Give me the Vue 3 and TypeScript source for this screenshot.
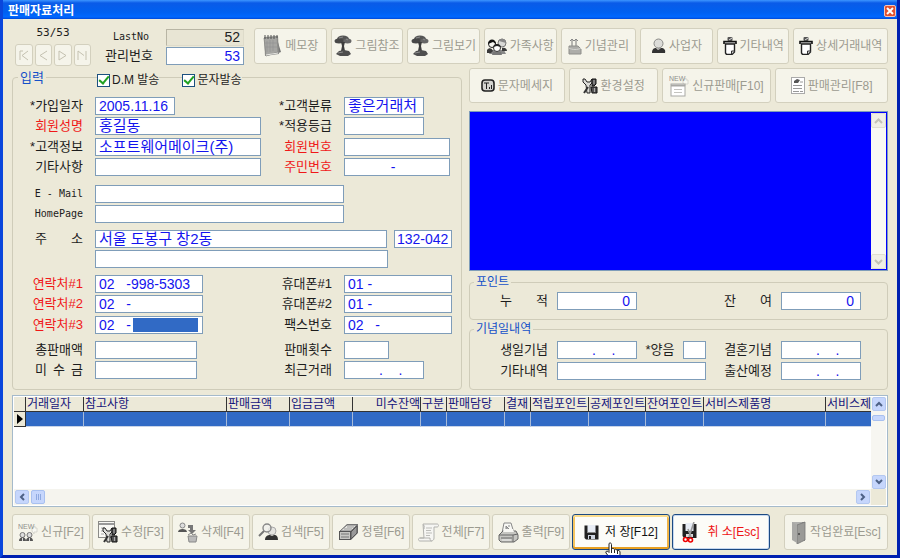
<script setup lang="ts">
import { reactive } from 'vue'

interface ActionButton {
  id: string
  text: string
  icon: string
}

interface GridColumn {
  title: string
  width?: number
  right?: boolean
}

const nb = (n: number): string => '\u00a0'.repeat(n)
const emptyDate = `${nb(8)}.${nb(4)}.`

const form = reactive({
  lastNo: '52',
  manageNo: '53',
  dm: true,
  sms: true,
  joined: '2005.11.16',
  name: '홍길동',
  info: '소프트웨어메이크(주)',
  etc: '',
  kind: '좋은거래처',
  grade: '',
  memberNo: '',
  residentNo: `${nb(11)}-`,
  email: '',
  homepage: '',
  address1: '서울 도봉구 창2동',
  address2: '',
  zip: '132-042',
  tel1: `02${nb(3)}-998-5303`,
  tel2: `02${nb(3)}-`,
  tel3: `02${nb(3)}-`,
  cell1: '01 -',
  cell2: '01 -',
  fax: `02${nb(3)}-`,
  total: '',
  unpaid: '',
  count: '',
  recent: emptyDate,
  points: '0',
  remain: '0',
  birthday: emptyDate,
  calendar: '',
  wedding: emptyDate,
  anniversary: '',
  childbirth: emptyDate,
  notes: '',
})

const navButtons = [
  { id: 'first', label: '처음', path: 'M2 2v9M10 2L4 6.500L10 11M2 2h3' },
  { id: 'prev', label: '이전', path: 'M10 2L3 6.500L10 11' },
  { id: 'next', label: '다음', path: 'M2 11V2L9 6.500L2 11' },
  { id: 'last', label: '마지막', path: 'M2 11V2L8 6.500M10 11V2' },
]

const topButtons: ActionButton[] = [
  { id: 'memo', text: '메모장', icon: 'memo' },
  { id: 'pic-ref', text: '그림참조', icon: 'tree' },
  { id: 'pic-view', text: '그림보기', icon: 'tree' },
  { id: 'family', text: '가족사항', icon: 'family' },
  { id: 'anniv', text: '기념관리', icon: 'cake' },
  { id: 'business', text: '사업자', icon: 'person' },
  { id: 'others', text: '기타내역', icon: 'clip' },
  { id: 'detail', text: '상세거래내역', icon: 'clip' },
]

const sideButtons: ActionButton[] = [
  { id: 'message', text: '문자메세지', icon: 'signal' },
  { id: 'settings', text: '환경설정', icon: 'tools' },
  { id: 'new-sale', text: '신규판매[F10]', icon: 'newDoc' },
  { id: 'sales', text: '판매관리[F8]', icon: 'doc' },
]

const bottomButtons: ActionButton[] = [
  { id: 'new', text: '신규[F2]', icon: 'newPeople' },
  { id: 'edit', text: '수정[F3]', icon: 'docTools' },
  { id: 'delete', text: '삭제[F4]', icon: 'trash' },
  { id: 'search', text: '검색[F5]', icon: 'search' },
  { id: 'sort', text: '정렬[F6]', icon: 'stack' },
  { id: 'all', text: '전체[F7]', icon: 'scroll' },
  { id: 'print', text: '출력[F9]', icon: 'printer' },
]

const columns: GridColumn[] = [
  { title: '거래일자', width: 58 },
  { title: '참고사항', width: 143 },
  { title: '판매금액', width: 63 },
  { title: '입금금액', width: 63 },
  { title: '미수잔액', width: 68, right: true },
  { title: '구분', width: 26 },
  { title: '판매담당', width: 58 },
  { title: '결재', width: 26 },
  { title: '적립포인트', width: 58 },
  { title: '공제포인트', width: 57 },
  { title: '잔여포인트', width: 58 },
  { title: '서비스제품명', width: 122 },
  { title: '서비스제' },
]

const newTag =
  '<path d="M14 6l3-2v2h2v4h-3v2l-2-3z" fill="#f8f8f2" stroke="#cfcfc8" stroke-width=".8"/><text x="0" y="7" font-family="Liberation Sans, sans-serif" font-size="7" fill="#8f8f8a">NEW</text>'
const wrenches =
  '<path d="M1 1v3l3 3 1 8h3l0-8 2-2V1L8 4H5L3 1z" fill="#dcdcd8" stroke="#222"/><path d="M10 1h4v5l-2 2h-2zM9 9h6v6h-5z" fill="#555" stroke="#111"/><path d="M2 15l4-6" stroke="#333" stroke-width="2"/><path d="M12 2v4M12.500 10v4" stroke="#aaa"/>'

const icons: Record<string, { w: number; h: number; body: string }> = {
  memo: {
    w: 20,
    h: 24,
    body: '<path d="M15 5l4 13-5 2z" fill="#777"/><path d="M2 3L16 2l1 18L3 22z" fill="#8d8d8b"/><path d="M2 4L15 3l1 15L4 22z" fill="#a6a6a3" stroke="#8a8a87" stroke-width=".8"/><path d="M5 7v11M8 6v12M11 6v11M3 9h12M3 13h12" stroke="#929290" stroke-width=".6"/><path d="M3 1v4M6 1v4M9 1v4M12 1v4M15 1v3" stroke="#555" stroke-width="1"/><path d="M4 21l12-2" stroke="#e8e8e4" stroke-width="1"/>',
  },
  tree: {
    w: 18,
    h: 22,
    body: '<ellipse cx="9" cy="4" rx="6" ry="3.500" fill="#555"/><ellipse cx="5" cy="6" rx="4.500" ry="2.500" fill="#484848"/><ellipse cx="13.500" cy="6" rx="4" ry="2.500" fill="#666"/><path d="M7 7h4l-1 4 1 5H7l1-5z" fill="#3d3d3d"/><path d="M2 19l3-3 5-1 5 1 2 3-3 2-8 0z" fill="#4e4e4e"/><path d="M5 3l4-1M4 18l5-1M12 4l2 1" stroke="#8c8c8c" stroke-width="1"/>',
  },
  family: {
    w: 20,
    h: 17,
    body: '<path d="M4 12h13l2 4H2z" fill="#888"/><circle cx="5" cy="6" r="3.500" fill="#f6f6f2" stroke="#222"/><path d="M1 6c0-6 8-6 8 0l-3-2z" fill="#111"/><circle cx="15" cy="5" r="4" fill="#d9d9d6" stroke="#777"/><path d="M12 3c2-4 7-2 7 2z" fill="#888"/><circle cx="10" cy="10" r="3.500" fill="#fff" stroke="#333"/><path d="M6 9c1-4 7-4 8 0l-4-1z" fill="#222"/><path d="M0 12c2-3 5-2 6 1l-2 2H0zM15 10c3-1 5 1 5 3h-5z" fill="#3a3a3a"/><path d="M6 14h8l1 3H5z" fill="#777"/>',
  },
  cake: {
    w: 14,
    h: 17,
    body: '<path d="M4 2v6M8 2v6" stroke="#777"/><path d="M2 3l2-2 2 2M6 3l2-2 2 2" fill="none" stroke="#888"/><path d="M1 8h9l3 3v5H1z" fill="#adada9" stroke="#8e8e8a"/><path d="M1 10c3 2 9 2 12 0" fill="none" stroke="#d4d4d0"/>',
  },
  person: {
    w: 15,
    h: 16,
    body: '<circle cx="7.500" cy="5.500" r="4.500" fill="#dcdcd8" stroke="#8b8b88"/><path d="M1 15c0-4 2-5 4-5l2 2 3-2c3 0 5 2 4 5z" fill="#333"/><path d="M6 10h3l-1 2z" fill="#999"/>',
  },
  clip: {
    w: 14,
    h: 18,
    body: '<rect x="4.500" y="0" width="5" height="4" rx="1" fill="#555"/><path d="M6 3l3-2" stroke="#ddd"/><path d="M1 7V4.500h12V7" fill="#bbb" stroke="#111" stroke-width="1.600"/><path d="M2.500 7V16l1 1.500H9L11.500 15V7z" fill="#fff" stroke="#222" stroke-width="1.400"/><path d="M8.500 17v-3h3" fill="#ccc" stroke="#333"/>',
  },
  signal: {
    w: 14,
    h: 13,
    body: '<rect x="1" y="1" width="12" height="11" rx="3" fill="#d4d4d0" stroke="#222" stroke-width="1.600"/><path d="M3 4h5M5.500 4v6M8.500 8v2M10.500 6v4" stroke="#222" stroke-width="1"/>',
  },
  tools: { w: 16, h: 16, body: wrenches },
  newDoc: {
    w: 20,
    h: 24,
    body: `${newTag}<rect x="2" y="10" width="14" height="12" fill="#fff" stroke="#a8a8a4"/><path d="M2 11.500h14" stroke="#a8a8a4" stroke-width="2"/><path d="M5 15.500h8M5 18.500h8" stroke="#c4c4c0"/>`,
  },
  doc: {
    w: 14,
    h: 18,
    body: '<rect x=".5" y=".5" width="13" height="16" fill="#fff" stroke="#aaa"/><path d="M3 4l3-2 3 1-2 3H3z" fill="#555"/><path d="M9 5h3M2 8.500h9M2 11.500h9M2 14.500h6M9 14.500h3" stroke="#999"/>',
  },
  newPeople: {
    w: 20,
    h: 20,
    body: `${newTag}<circle cx="4.500" cy="13" r="2.500" fill="#ddd" stroke="#777"/><circle cx="11.500" cy="13" r="2.500" fill="#ddd" stroke="#777"/><path d="M1 19c0-5 7-5 7 0zM8 19c0-5 7-5 7 0z" fill="#555"/><path d="M4.500 16v3M11.500 16v3" stroke="#ddd"/>`,
  },
  docTools: {
    w: 20,
    h: 22,
    body: `<rect x=".5" y=".5" width="16" height="16" fill="#f8f8f4" stroke="#8b8b88"/><path d="M1 3h15" stroke="#999" stroke-width="2"/><path d="M3 7h4M3 10h3M3 13h3" stroke="#aaa"/><g transform="translate(4 6)">${wrenches}</g>`,
  },
  trash: {
    w: 20,
    h: 21,
    body: '<circle cx="4.500" cy="3.500" r="2.500" fill="#ddd" stroke="#888"/><path d="M0 10c0-4 9-4 9 0z" fill="#555"/><path d="M10 3h5v5h3l-4 4-4-4h2V6h-2z" fill="#777"/><path d="M10 14h9l-1 6h-7z" fill="#bbb" stroke="#888"/><path d="M10 13l3-2 2 2 3-1" fill="none" stroke="#888"/>',
  },
  search: {
    w: 20,
    h: 18,
    body: '<circle cx="14" cy="8" r="4" fill="#e4e4e0" stroke="#aaa"/><path d="M7 17c0-4 3-5 5-5l2 1 2-1c3 0 4 2 4 5z" fill="#333"/><circle cx="9" cy="5" r="4" fill="#f0f0ec" fill-opacity=".8" stroke="#888" stroke-width="1.400"/><path d="M6 8l-5 5" stroke="#777" stroke-width="2"/>',
  },
  stack: {
    w: 21,
    h: 18,
    body: '<path d="M1 9L9 1h11v9l-7 7H1z" fill="#777"/><path d="M2 8l7-6h10l-6 6z" fill="#e2e2de" stroke="#777"/><path d="M13 9l6-6v7l-6 6z" fill="#999" stroke="#555"/><rect x="1.500" y="8.500" width="11" height="8" fill="#c8c8c4" stroke="#555"/><path d="M3 11h8M3 14h8" stroke="#777"/><path d="M6 6l8 0M9 4h7" stroke="#999"/>',
  },
  scroll: {
    w: 21,
    h: 19,
    body: '<path d="M5 1h14c2 0 2 3 0 3h-3v11c0 3-3 3-3 3H2c-2 0-2-3 0-3h4z" fill="#f6f6f3" stroke="#b2b2ae"/><path d="M5 2c2 0 1 2 1 4M2 15h10c0 3 1 3 2 3" fill="none" stroke="#b2b2ae"/><path d="M8 5h6M8 7.500h5M8 10h6M8 12.500h4" stroke="#bdbdb9"/>',
  },
  printer: {
    w: 21,
    h: 21,
    body: '<path d="M4 11L6 1h7l3 10z" fill="#f8f8f4" stroke="#888"/><path d="M8 4v5l4-1zM11 3v2" fill="#aaa" stroke="#888"/><path d="M1 13l4-4h13l2 4v4l-4 3H3l-2-2z" fill="#c6c6c2" stroke="#666"/><path d="M1 13h14l5-1M3 16h11M15 13v7" fill="none" stroke="#666"/><path d="M5 10h11l-1-3H6z" fill="#f8f8f4"/><path d="M4 18h9" stroke="#eee"/>',
  },
  save: {
    w: 15,
    h: 15,
    body: '<path d="M.5 .5h14v14H2L.5 13z" fill="#222"/><rect x="3.500" y="0" width="8" height="7" fill="#e8edf5"/><path d="M3 7.500h9" stroke="#888"/><rect x="4" y="10" width="7" height="4" fill="#cfd6e2"/><rect x="5" y="11" width="2" height="3" fill="#222"/>',
  },
  cancel: {
    w: 16,
    h: 21,
    body: '<path d="M.5 2h14v14H2L.5 14z" fill="#222"/><rect x="3.500" y="1" width="8" height="8" fill="#e8edf5"/><path d="M4 12h7v3H4z" fill="#ddd"/><path d="M12 0L7 15M6 7l3 8" stroke="#999" stroke-width="1.600"/><circle cx="3.500" cy="17.500" r="2" fill="none" stroke="#e00" stroke-width="1.600"/><circle cx="8.500" cy="18" r="2" fill="none" stroke="#e00" stroke-width="1.600"/>',
  },
  door: {
    w: 16,
    h: 23,
    body: '<path d="M1 1h13v19l-3-1V3H1z" fill="#8c8c89"/><rect x="1" y="1" width="10" height="18" fill="#b0b0ad"/><path d="M6 4l8-3v18l-8 4z" fill="#9a9a97" stroke="#777" stroke-width=".8"/><path d="M1 1v18l5 3V4z" fill="#a9a9a6"/><path d="M8 12v2" stroke="#444" stroke-width="1.500"/>',
  },
}
</script>

<template>
  <div class="window">
    <header class="title-bar">
      <h1>판매자료처리</h1>
      <button class="close" type="button" aria-label="닫기">
        <svg width="8" height="8" viewBox="0 0 8 8"><path d="M1 1l6 6M7 1L1 7" stroke="#fff" stroke-width="2" /></svg>
      </button>
    </header>

    <main class="content">
      <div class="top">
        <div class="record-nav">
          <span class="position">53/53</span>
          <div class="nav-buttons">
            <button v-for="n in navButtons" :key="n.id" type="button" :aria-label="n.label" disabled>
              <svg width="12" height="13" viewBox="0 0 12 13"><path :d="n.path" fill="none" stroke="#c4c1b0" /></svg>
            </button>
          </div>
        </div>
        <div class="numbers">
          <label class="latin" for="lastNo">LastNo</label>
          <input id="lastNo" v-model="form.lastNo" class="right readonly" readonly />
          <label for="manageNo">관리번호</label>
          <input id="manageNo" v-model="form.manageNo" class="right" />
        </div>
        <div class="toolbar">
          <button v-for="b in topButtons" :key="b.id" class="btn" type="button" disabled>
            <svg :width="icons[b.icon].w" :height="icons[b.icon].h" v-html="icons[b.icon].body" />
            <span>{{ b.text }}</span>
          </button>
        </div>
      </div>

      <div class="body">
        <fieldset class="entry">
          <legend>입력</legend>
          <div class="checks">
            <label><input v-model="form.dm" type="checkbox" />D.M 발송</label>
            <label><input v-model="form.sms" type="checkbox" />문자발송</label>
          </div>

          <div class="group">
            <label for="joined">*가입일자</label>
            <div><input id="joined" v-model="form.joined" class="w-date" /></div>
            <label for="kind">*고객분류</label>
            <div><input id="kind" v-model="form.kind" class="w-date hangul" /></div>
            <label for="name" class="red">회원성명</label>
            <div><input id="name" v-model="form.name" class="w-name hangul" /></div>
            <label for="grade">*적용등급</label>
            <div><input id="grade" v-model="form.grade" class="w-date" /></div>
          </div>

          <div class="group near">
            <label for="info">*고객정보</label>
            <div><input id="info" v-model="form.info" class="w-name hangul" /></div>
            <label for="memberNo" class="red">회원번호</label>
            <div><input id="memberNo" v-model="form.memberNo" class="w-no" /></div>
            <label for="etc">기타사항</label>
            <div><input id="etc" v-model="form.etc" class="w-name hangul" /></div>
            <label for="residentNo" class="red">주민번호</label>
            <div><input id="residentNo" v-model="form.residentNo" class="w-no" /></div>
          </div>

          <div class="group far">
            <label for="email" class="latin">E - Mail</label>
            <div class="wide"><input id="email" v-model="form.email" class="w-mail" /></div>
            <label for="homepage" class="latin">HomePage</label>
            <div class="wide"><input id="homepage" v-model="form.homepage" class="w-mail" /></div>
          </div>

          <div class="group mid">
            <label for="address1" class="spread">주 소</label>
            <div class="wide">
              <input id="address1" v-model="form.address1" class="w-address hangul" />
              <input v-model="form.zip" class="w-zip" aria-label="우편번호" />
            </div>
            <span></span>
            <div class="wide"><input v-model="form.address2" class="w-address hangul" aria-label="상세주소" /></div>
          </div>

          <div class="group mid">
            <label for="tel1" class="red">연락처#1</label>
            <div><input id="tel1" v-model="form.tel1" class="w-tel" /></div>
            <label for="cell1">휴대폰#1</label>
            <div><input id="cell1" v-model="form.cell1" class="w-tel" /></div>
            <label for="tel2" class="red">연락처#2</label>
            <div><input id="tel2" v-model="form.tel2" class="w-tel" /></div>
            <label for="cell2">휴대폰#2</label>
            <div><input id="cell2" v-model="form.cell2" class="w-tel" /></div>
          </div>

          <div class="group near">
            <label for="tel3" class="red">연락처#3</label>
            <div class="selected-field">
              <input id="tel3" v-model="form.tel3" class="w-tel" />
              <span class="selection"></span>
            </div>
            <label for="fax">팩스번호</label>
            <div><input id="fax" v-model="form.fax" class="w-tel" /></div>
          </div>

          <div class="group mid">
            <label for="total">총판매액</label>
            <div><input id="total" v-model="form.total" class="w-sum" /></div>
            <label for="count">판매횟수</label>
            <div><input id="count" v-model="form.count" class="w-count" /></div>
            <label for="unpaid" class="spread">미 수 금</label>
            <div><input id="unpaid" v-model="form.unpaid" class="w-sum" /></div>
            <label for="recent">최근거래</label>
            <div><input id="recent" v-model="form.recent" class="w-date" /></div>
          </div>
        </fieldset>

        <div class="side">
          <div class="side-buttons">
            <button v-for="b in sideButtons" :key="b.id" class="btn" type="button" disabled>
              <svg :width="icons[b.icon].w" :height="icons[b.icon].h" v-html="icons[b.icon].body" />
              <span>{{ b.text }}</span>
            </button>
          </div>

          <div class="notes">
            <textarea v-model="form.notes" aria-label="메모"></textarea>
            <div class="notes-scroll">
              <button type="button" aria-label="위로" disabled>
                <svg width="9" height="6" viewBox="0 0 9 6"><path d="M1 5l3.500-3.500L8 5" fill="none" stroke="#c3c2b6" stroke-width="2" /></svg>
              </button>
              <button type="button" aria-label="아래로" disabled>
                <svg width="9" height="6" viewBox="0 0 9 6"><path d="M1 1l3.500 3.500L8 1" fill="none" stroke="#c3c2b6" stroke-width="2" /></svg>
              </button>
            </div>
          </div>

          <fieldset class="panel points">
            <legend>포인트</legend>
            <div class="pair">
              <label for="points" class="spread">누 적</label>
              <div><input id="points" v-model="form.points" class="w-date right inset" /></div>
              <label for="remain" class="spread">잔 여</label>
              <div><input id="remain" v-model="form.remain" class="w-date right inset" /></div>
            </div>
          </fieldset>

          <fieldset class="panel days">
            <legend>기념일내역</legend>
            <div class="pair">
              <label for="birthday">생일기념</label>
              <div class="birth">
                <input id="birthday" v-model="form.birthday" class="w-date" />
                <label for="calendar">*양음</label>
                <input id="calendar" v-model="form.calendar" class="w-tiny" />
              </div>
              <label for="wedding">결혼기념</label>
              <div><input id="wedding" v-model="form.wedding" class="w-date" /></div>
              <label for="anniversary">기타내역</label>
              <div><input id="anniversary" v-model="form.anniversary" class="w-memo hangul" /></div>
              <label for="childbirth">출산예정</label>
              <div><input id="childbirth" v-model="form.childbirth" class="w-date" /></div>
            </div>
          </fieldset>
        </div>
      </div>

      <section class="sheet">
        <div class="sheet-main">
          <table>
            <colgroup>
              <col class="mark-col" />
              <col v-for="c in columns" :key="c.title" :style="c.width ? { width: c.width + 'px' } : undefined" />
            </colgroup>
            <thead>
              <tr>
                <th></th>
                <th v-for="c in columns" :key="c.title" :class="{ end: c.right }">{{ c.title }}</th>
              </tr>
            </thead>
            <tbody>
              <tr>
                <td class="mark">
                  <svg width="6" height="10" viewBox="0 0 6 10"><path d="M0 0l6 5-6 5z" fill="#000" /></svg>
                </td>
                <td v-for="c in columns" :key="c.title"></td>
              </tr>
            </tbody>
          </table>
          <div class="h-scroll">
            <button class="sb" type="button" aria-label="왼쪽">
              <svg width="6" height="8" viewBox="0 0 6 8"><path d="M5 1L2 4l3 3" fill="none" stroke="#4d6185" stroke-width="2" /></svg>
            </button>
            <span class="h-thumb"><i></i><i></i><i></i></span>
            <button class="sb push" type="button" aria-label="오른쪽">
              <svg width="6" height="8" viewBox="0 0 6 8"><path d="M1 1l3 3-3 3" fill="none" stroke="#4d6185" stroke-width="2" /></svg>
            </button>
          </div>
        </div>
        <div class="v-scroll">
          <button class="sb" type="button" aria-label="위로">
            <svg width="8" height="6" viewBox="0 0 8 6"><path d="M1 5l3-3 3 3" fill="none" stroke="#4d6185" stroke-width="2" /></svg>
          </button>
          <span class="v-thumb"></span>
          <button class="sb push-down" type="button" aria-label="아래로">
            <svg width="8" height="6" viewBox="0 0 8 6"><path d="M1 1l3 3 3-3" fill="none" stroke="#4d6185" stroke-width="2" /></svg>
          </button>
          <span class="corner"></span>
        </div>
      </section>

      <footer class="actions">
        <button v-for="b in bottomButtons" :key="b.id" class="btn action" type="button" disabled>
          <svg :width="icons[b.icon].w" :height="icons[b.icon].h" v-html="icons[b.icon].body" />
          <span>{{ b.text }}</span>
        </button>
        <button class="btn live save" type="button">
          <svg :width="icons.save.w" :height="icons.save.h" v-html="icons.save.body" />
          <span>저 장[F12]</span>
          <svg class="pointer" width="18" height="20" viewBox="0 0 18 20">
            <path d="M4 1.500c1-1 2.500-.5 2.500 1V7c1-1 2.500-.5 3 .5 1-.7 2.300-.2 2.500 1 1.500-.5 3 .3 3 1.500V15l-2 5H6l-1-4-4-5c-.8-1.500 1-2.500 2-1.500l1 1z" fill="#fff" stroke="#222" />
            <path d="M6.500 7v4M9.500 8v3M12.500 9v3" stroke="#222" />
          </svg>
        </button>
        <button class="btn live cancel" type="button">
          <svg :width="icons.cancel.w" :height="icons.cancel.h" v-html="icons.cancel.body" />
          <span>취 소[Esc]</span>
        </button>
        <button class="btn done" type="button" disabled>
          <svg :width="icons.door.w" :height="icons.door.h" v-html="icons.door.body" />
          <span>작업완료[Esc]</span>
        </button>
      </footer>
    </main>
  </div>
</template>

<style>
body {
  margin: 0;
  background: #ece9d8;
}
</style>

<style scoped>
.window,
.window * {
  box-sizing: border-box;
}

.window {
  display: flex;
  flex-direction: column;
  min-height: 100vh;
  overflow: hidden;
  border: solid #0a46dc;
  border-width: 0 3px 3px;
  border-right-color: #0020b0;
  border-bottom-color: #0020b0;
  background: #ece9d8;
  color: #1c1c1c;
  font: 13px/16px 'Liberation Sans', 'Noto Sans CJK KR', sans-serif;
}

button,
input,
textarea {
  margin: 0;
  font-family: inherit;
}

svg {
  display: block;
  flex: none;
}

.title-bar {
  display: flex;
  align-items: center;
  justify-content: space-between;
  height: 19px;
  margin: 0 -3px;
  padding: 2px 4px 0 8px;
  background: linear-gradient(#3d95ff 0, #0a5be8 3px, #0060f0 12px, #0068ff 17px, #0048d8 19px);
}

.title-bar h1 {
  margin: 0;
  color: #fff;
  font-size: 12px;
  line-height: 16px;
  font-weight: 700;
}

.close {
  display: flex;
  align-items: center;
  justify-content: center;
  width: 12px;
  height: 12px;
  padding: 0;
  border: 1px solid #f4c4b8;
  border-radius: 2px;
  background: #e2512f;
}

.content {
  display: flex;
  flex: 1;
  flex-direction: column;
  padding: 9px 9px 5px;
}

.top {
  display: flex;
  height: 36px;
}

.record-nav {
  display: flex;
  flex-direction: column;
  align-items: center;
  justify-content: space-between;
  width: 79px;
  height: 39px;
  padding-left: 3px;
  margin-top: -1px;
}

.position {
  font: 11px/12px 'DejaVu Sans Mono', monospace;
}

.nav-buttons {
  display: flex;
  gap: 2px;
  width: 100%;
}

.nav-buttons button {
  display: flex;
  flex: 1;
  align-items: center;
  justify-content: center;
  height: 22px;
  padding: 0;
  border: 1px solid #d3d0be;
  border-radius: 3px;
  background: #f5f4ea;
}

.numbers {
  display: grid;
  grid-template-columns: 49px 78px;
  grid-auto-rows: 18px;
  gap: 1px 12px;
  width: 163px;
  padding-left: 14px;
  justify-content: start;
  align-items: center;
}

.numbers label {
  white-space: nowrap;
}

label.latin {
  font: 10px/18px 'DejaVu Sans Mono', monospace;
}

.numbers label.latin {
  text-align: right;
  padding-right: 5px;
}

.toolbar {
  display: grid;
  flex: 1;
  grid-template-columns: 73fr 73fr 73fr 73fr 76fr 73fr 73fr 95fr;
  gap: 4px;
}

.btn {
  display: flex;
  align-items: center;
  justify-content: center;
  gap: 3px;
  min-width: 0;
  height: 36px;
  padding: 0;
  border: 1px solid #d3d0be;
  border-radius: 3px;
  background: #f5f4ea;
  color: #9c9b90;
  font-size: 12px;
  line-height: 16px;
  white-space: nowrap;
}

input {
  height: 18px;
  padding: 0 3px;
  border: 1px solid #7f9db9;
  border-radius: 0;
  outline: 0;
  background: #fff;
  color: #1414ee;
  font-size: 14px;
  line-height: 16px;
}

input.hangul {
  padding-bottom: 3px;
  font-size: 15px;
}

input.right {
  text-align: right;
}

input.inset {
  padding-right: 6px;
}

input.readonly {
  height: 17px;
  border-color: #b8b5a4 #dedbca #dedbca #b8b5a4;
  background: #e8e5d4;
  color: #222;
}

.body {
  display: grid;
  grid-template-columns: 450fr 419fr;
  gap: 7px;
  margin-top: 4px;
}

fieldset {
  min-width: 0;
  margin: 0;
  border: 1px solid #cfccb9;
  border-radius: 4px;
}

legend {
  padding: 0 2px;
  color: #1450c8;
}

.entry {
  margin-top: 3px;
  padding: 0 9px 10px 15px;
}

.entry legend {
  margin-left: -10px;
  line-height: 13px;
}

.checks {
  display: flex;
  gap: 23px;
  height: 14px;
  margin: -11px 0 10px 69px;
  font-size: 12px;
}

.checks label {
  display: flex;
  align-items: center;
  gap: 2px;
  background: #ece9d8;
}

.checks input {
  display: grid;
  place-items: center;
  appearance: none;
  width: 13px;
  height: 13px;
  padding: 0;
  border: 1px solid #1c5180;
}

.checks input:checked::after {
  content: '';
  width: 4px;
  height: 8px;
  border: solid #21a121;
  border-width: 0 2px 2px 0;
  transform: translateY(-1px) rotate(40deg);
}

.group {
  display: grid;
  grid-template-columns: 55px 1fr 55px 108px;
  grid-auto-rows: 18px;
  gap: 2px 12px;
}

.group.near {
  margin-top: 3px;
}

.group.mid {
  margin-top: 7px;
}

.group.far {
  margin-top: 9px;
}

.group > div,
.pair > div {
  display: flex;
  min-width: 0;
}

.group label,
.pair label {
  line-height: 18px;
}

.group > label,
.pair > label {
  text-align: right;
  white-space: nowrap;
}

.group > .wide {
  grid-column: 2 / -1;
  gap: 7px;
}

.group > label.spread,
.pair > label.spread {
  width: 48px;
  margin-left: auto;
  text-align: justify;
  text-align-last: justify;
  white-space: normal;
}

.red {
  color: #f01818;
}

.w-date {
  width: 80px;
}

.w-name {
  width: 166px;
}

.w-no {
  width: 106px;
}

.w-mail {
  width: 249px;
}

.w-address {
  width: 293px;
}

.w-zip {
  width: 58px;
  padding: 0 2px;
}

.w-tel {
  width: 108px;
}

.w-sum {
  width: 102px;
}

.w-count {
  width: 45px;
}

.w-tiny {
  width: 23px;
}

.w-memo {
  width: 149px;
}

.selected-field {
  position: relative;
}

.selection {
  position: absolute;
  top: 2px;
  left: 38px;
  width: 65px;
  height: 14px;
  background: #316ac5;
}

.side {
  display: flex;
  flex-direction: column;
  min-width: 0;
}

.side-buttons {
  display: grid;
  grid-template-columns: 96fr 89fr 110fr 113fr;
  gap: 4px;
}

.side-buttons .btn {
  height: 35px;
}

.notes {
  display: flex;
  flex: 1;
  margin-top: 8px;
  border: 1px solid #7f9db9;
  background: #0000ff;
}

.notes textarea {
  flex: 1;
  height: 100%;
  min-width: 0;
  padding: 2px;
  border: 0;
  outline: 0;
  resize: none;
  background: transparent;
  color: #fff;
}

.notes-scroll {
  display: flex;
  flex-direction: column;
  justify-content: space-between;
  width: 15px;
  margin: 1px;
  background: #f9f9f4;
}

.notes-scroll button {
  display: flex;
  align-items: center;
  justify-content: center;
  height: 15px;
  padding: 0;
  border: 1px solid #e0dfd2;
  border-radius: 2px;
  background: #f0efe6;
}

.panel legend {
  margin-left: -25px;
  font-size: 12px;
  line-height: 12px;
}

.points {
  margin-top: 5px;
  padding: 4px 26px 9px 29px;
}

.days {
  margin-top: 3px;
  padding: 6px 26px 9px 29px;
}

.pair {
  display: grid;
  grid-template-columns: 49px 1fr 49px 80px;
  grid-auto-rows: 18px;
  gap: 3px 9px;
}

.pair > .birth {
  justify-content: space-between;
  width: 149px;
}

.sheet {
  display: flex;
  flex: 1;
  margin: 5px 0 7px;
  padding: 1px;
  border: 1px solid #a5bacb;
  background: #fff;
}

.sheet-main {
  display: flex;
  flex: 1;
  flex-direction: column;
  justify-content: space-between;
  min-width: 0;
  overflow: hidden;
}

table {
  width: 100%;
  border-collapse: separate;
  border-spacing: 0;
  table-layout: fixed;
}

.mark-col {
  width: 12px;
}

th {
  height: 15px;
  padding: 0 0 0 1px;
  overflow: hidden;
  border-right: 1px solid #333;
  border-bottom: 1px solid #333;
  background: #ece9d8;
  color: #14147c;
  font-size: 12px;
  line-height: 14px;
  font-weight: 400;
  text-align: left;
  white-space: nowrap;
}

th.end {
  text-align: right;
}

td {
  height: 15px;
  padding: 0;
  border-right: 1px solid #a9bbd8;
  border-bottom: 1px solid #c8d4e8;
  background: #316ac5;
}

th:last-child,
td:last-child {
  border-right: 0;
}

td.mark {
  padding-left: 3px;
  border-right: 1px solid #333;
  border-bottom: 1px solid #333;
  background: #ece9d8;
}

.h-scroll {
  display: flex;
  align-items: center;
  gap: 2px;
  height: 16px;
  padding: 0 1px;
  background: #f5f4ee;
}

.sb {
  display: flex;
  align-items: center;
  justify-content: center;
  width: 14px;
  height: 14px;
  padding: 0;
  border: 1px solid #b4c8f0;
  border-radius: 2px;
  background: #c6d6fc;
}

.push {
  margin-left: auto;
}

.h-thumb {
  display: flex;
  align-items: center;
  justify-content: center;
  gap: 1px;
  width: 14px;
  height: 14px;
  border: 1px solid #a8c0f0;
  border-radius: 2px;
  background: #c6d6fc;
}

.h-thumb i {
  width: 1px;
  height: 6px;
  background: #8fa9e0;
}

.v-scroll {
  display: flex;
  flex-direction: column;
  align-items: center;
  width: 15px;
  background: #f7f6f1;
}

.v-thumb {
  width: 13px;
  height: 6px;
  margin-top: 4px;
  border: 1px solid #a8c0f0;
  border-radius: 2px;
  background: #c6d6fc;
}

.push-down {
  margin-top: auto;
}

.corner {
  width: 15px;
  height: 16px;
  background: #ece9d8;
}

.actions {
  display: flex;
  gap: 2px;
}

.action {
  flex: 0 1 78px;
}

.live {
  flex: 0 1 98px;
  gap: 6px;
  border: 1px solid #1c4a82;
  background: #fcfcf8;
}

.save {
  position: relative;
  box-shadow: inset 0 2px #fbdc8c, inset 0 -2px #e8a020, inset 2px 0 #f5c560, inset -2px 0 #f0b548;
  color: #111;
}

.cancel {
  gap: 9px;
  box-shadow: inset 0 0 0 1px #c6d8f0;
  color: #ee1414;
}

.pointer {
  position: absolute;
  top: 27px;
  left: 32px;
}

.done {
  flex: 0 1 104px;
  margin-left: auto;
}
</style>
